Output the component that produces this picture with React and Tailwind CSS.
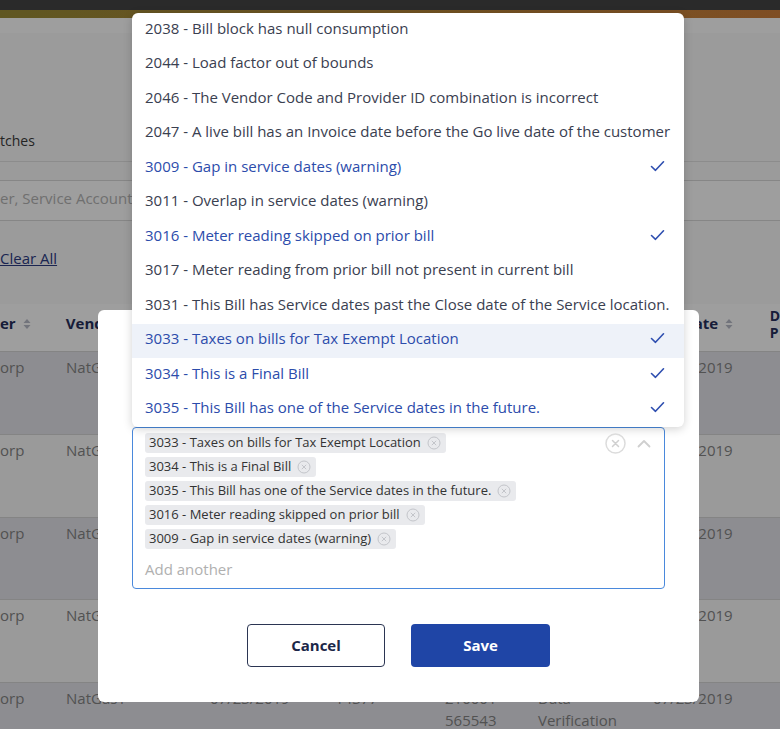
import React from "react";

const options = [
  { code: "2038", label: "Bill block has null consumption" },
  { code: "2044", label: "Load factor out of bounds" },
  { code: "2046", label: "The Vendor Code and Provider ID combination is incorrect" },
  { code: "2047", label: "A live bill has an Invoice date before the Go live date of the customer" },
  { code: "3009", label: "Gap in service dates (warning)" },
  { code: "3011", label: "Overlap in service dates (warning)" },
  { code: "3016", label: "Meter reading skipped on prior bill" },
  { code: "3017", label: "Meter reading from prior bill not present in current bill" },
  { code: "3031", label: "This Bill has Service dates past the Close date of the Service location." },
  { code: "3033", label: "Taxes on bills for Tax Exempt Location" },
  { code: "3034", label: "This is a Final Bill" },
  { code: "3035", label: "This Bill has one of the Service dates in the future." },
];

const selected = ["3033", "3034", "3035", "3016", "3009"];

const rows = [1, 2, 3, 4, 5];

function SortIcon() {
  return (
    <svg width="8" height="12" viewBox="0 0 8 12" className="inline-block ml-[7px] -mt-[2px]">
      <path d="M4 1 L7.5 5 L0.5 5 Z" fill="#b8bcc8" />
      <path d="M4 11 L7.5 7 L0.5 7 Z" fill="#b8bcc8" />
    </svg>
  );
}

function Check() {
  return (
    <svg width="15" height="14" viewBox="0 0 15 14">
      <path d="M1.5 7.5 L5.5 11.3 L13.5 2.8" fill="none" stroke="#2f4fb0" strokeWidth="1.6" strokeLinecap="round" strokeLinejoin="round" />
    </svg>
  );
}

function TagX() {
  return (
    <svg width="14" height="14" viewBox="0 0 14 14" className="ml-[6px] shrink-0">
      <circle cx="7" cy="7" r="6" fill="none" stroke="#c3c5ca" strokeWidth="1" />
      <path d="M4.8 4.8 L9.2 9.2 M9.2 4.8 L4.8 9.2" stroke="#c3c5ca" strokeWidth="1" />
    </svg>
  );
}

export default function App() {
  return (
    <div
      className="relative w-full h-[729px] overflow-hidden bg-[#fbfbfb]"
      style={{ fontFamily: '"Open Sans", "Noto Sans", sans-serif' }}
    >
      {/* page behind the modal */}
      <div className="h-[10px] bg-[#454545]" />
      <div className="h-[8px] bg-gradient-to-r from-[#9a8c36] to-[#cd7f3a]" />
      <div className="h-[15px] bg-white" />

      <div className="pt-[95px] border-b border-[#e2e2e2] pb-[9px]">
        <span className="text-[14px] leading-[20px] text-[#3a3a3a]">tches</span>
      </div>
      <div className="mt-[18px] h-[41px] border-y border-[#d8d8d8] bg-white flex items-center pb-[4px]">
        <span className="text-[15px] text-[#b4b4b4]">er, Service Account</span>
      </div>
      <div className="pt-[25px] h-[83px]">
        <span className="text-[15px] leading-[22px] text-[#2d3c84] underline">Clear All</span>
      </div>

      {/* table */}
      <div className="bg-white h-[47px] flex items-center pb-[8px] text-[15px] font-bold text-[#26305c]">
        <div className="w-[66px]">
          er<SortIcon />
        </div>
        <div className="w-[587px]">Vendor</div>
        <div className="w-[119px] pl-[4px]">
          Bill Date<SortIcon />
        </div>
        <div className="leading-[17px] text-[14px]">
          D
          <br />P
        </div>
      </div>
      {rows.map((r) => (
        <div
          key={r}
          className={`h-[82.75px] flex pt-[4px] text-[15px] leading-[22px] text-[#858585] border-t border-[#d6d6d6] ${
            r % 2 === 1 ? "bg-[#e4e4ea]" : "bg-[#f9f9f9]"
          }`}
        >
          <div className="w-[66px]">orp</div>
          <div className="w-[144px]">NatGas1</div>
          <div className="w-[125px]">07/23/2019</div>
          <div className="w-[110px]">14377</div>
          <div className="w-[93px]">
            210001
            <br />
            565543
          </div>
          <div className="w-[115px]">
            Data
            <br />
            Verification
          </div>
          <div className="w-[119px]">07/23/2019</div>
        </div>
      ))}

      {/* dim overlay */}
      <div className="absolute inset-0 bg-black/[0.38]" />

      {/* modal */}
      <div className="absolute left-[98px] top-[310px] w-[601px] h-[392px] bg-white rounded-[6px] px-[34px] pt-[117px]">
        <div className="relative h-[162px] border border-[#4a89dc] rounded-[4px] pl-[12px] pt-[5px]">
          {/* open menu */}
          <div className="absolute left-[-1px] bottom-full mb-[1px] w-[552px] bg-white rounded-[6px] shadow-[0_2px_10px_rgba(0,0,0,0.18)] overflow-hidden">
            {options.map((o) => {
              const isSel = selected.includes(o.code);
              return (
                <div
                  key={o.code}
                  className={`h-[34.5px] flex items-center justify-between pl-[13px] pr-[19px] pb-[5px] text-[15px] ${
                    isSel ? "text-[#2c4cab]" : "text-[#3a4050]"
                  } ${o.code === "3033" ? "bg-[#eef2f9]" : ""}`}
                >
                  <span className="whitespace-nowrap">
                    {o.code} - {o.label}
                  </span>
                  {isSel && <Check />}
                </div>
              );
            })}
          </div>

          <div className="flex flex-col items-start gap-[4px]">
            {selected.map((c) => {
              const o = options.find((x) => x.code === c);
              return (
                <div
                  key={c}
                  className="h-[20px] flex items-center bg-[#e9eaed] rounded-[3px] pl-[4px] pr-[5px] pb-[1px] text-[13px] text-[#333]"
                >
                  <span className="whitespace-nowrap">
                    {o.code} - {o.label}
                  </span>
                  <TagX />
                </div>
              );
            })}
          </div>
          <div className="mt-[10px] text-[15px] leading-[20px] text-[#b0b0b0]">Add another</div>

          <div className="absolute top-[5px] right-[38px]">
            <svg width="21" height="21" viewBox="0 0 21 21">
              <circle cx="10.5" cy="10.5" r="9.5" fill="none" stroke="#dcdcdc" strokeWidth="1.5" />
              <path d="M7.5 7.5 L13.5 13.5 M13.5 7.5 L7.5 13.5" stroke="#d0d0d0" strokeWidth="1.5" strokeLinecap="round" />
            </svg>
          </div>
          <div className="absolute top-[11px] right-[13px]">
            <svg width="14" height="9" viewBox="0 0 14 9">
              <path d="M1.5 7.5 L7 2 L12.5 7.5" fill="none" stroke="#cfcfcf" strokeWidth="1.8" strokeLinecap="round" strokeLinejoin="round" />
            </svg>
          </div>
        </div>

        <div className="mt-[35px] flex justify-center gap-[26px]">
          <button className="w-[138px] h-[43px] rounded-[4px] border-[1.5px] border-[#2b3552] bg-white text-[15px] font-bold text-[#1b2748] pb-[1px]">
            Cancel
          </button>
          <button className="w-[139px] h-[43px] rounded-[4px] bg-[#1f45a6] text-[15px] font-bold text-white pb-[1px]">
            Save
          </button>
        </div>
      </div>
    </div>
  );
}
